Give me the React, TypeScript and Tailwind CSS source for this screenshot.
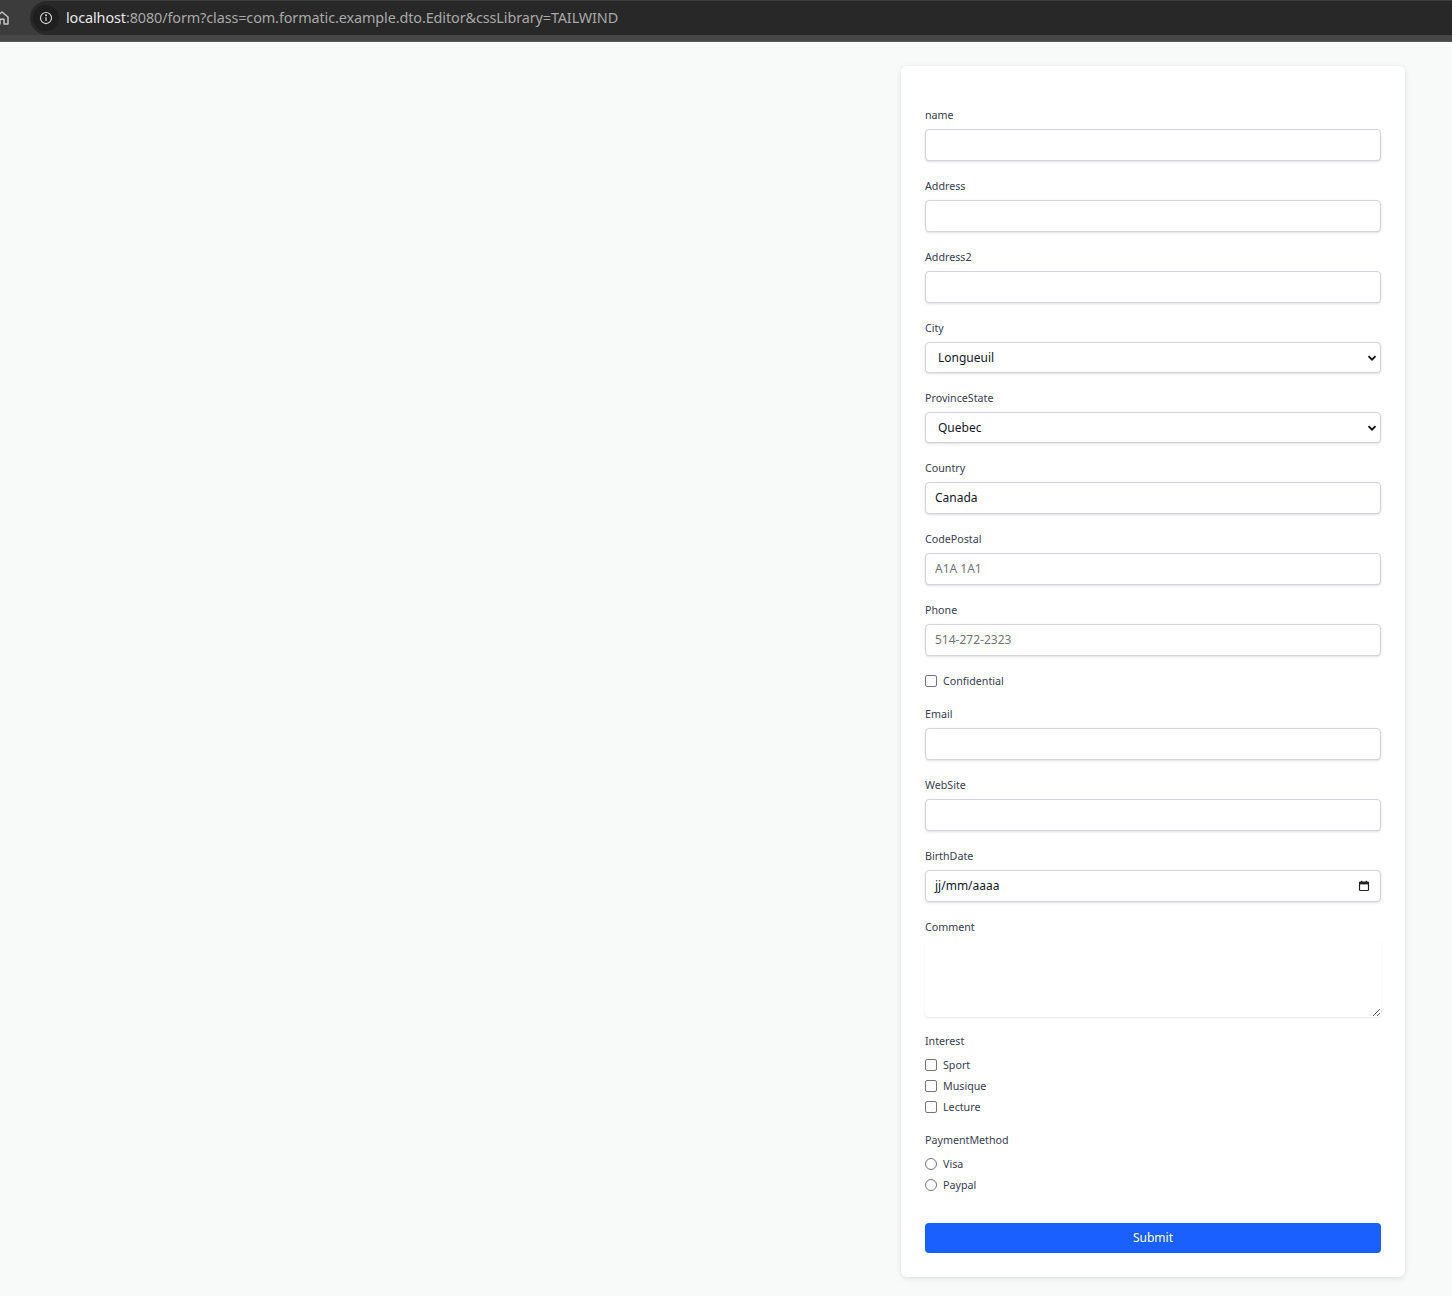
import React from "react";

const font = { fontFamily: '"Noto Sans", "Open Sans", sans-serif' };

function Label({ children }: { children: React.ReactNode }) {
  return <label className="block text-[10.7px] leading-[16px] text-[#374151] mb-[6px]">{children}</label>;
}

function TextField({ label, placeholder, value }: { label: string; placeholder?: string; value?: string }) {
  return (
    <div className="mb-[17px]">
      <Label>{label}</Label>
      <input
        type="text"
        defaultValue={value}
        placeholder={placeholder}
        className="block w-full h-[32px] rounded-[4px] border border-[#d1d5db] bg-white px-[9px] pb-[1px] text-[12px] text-[#111827] placeholder:text-[#757575] shadow-sm outline-none"
        style={font}
      />
    </div>
  );
}

function Chevron() {
  return (
    <svg width="10" height="10" viewBox="0 0 10 10" className="absolute right-[4px] top-1/2 -translate-y-1/2 pointer-events-none">
      <path d="M1.5 3.2 L5 6.7 L8.5 3.2" fill="none" stroke="#111" strokeWidth="1.9" />
    </svg>
  );
}

function SelectField({ label, value }: { label: string; value: string }) {
  return (
    <div className="mb-[17px]">
      <Label>{label}</Label>
      <div className="relative">
        <select
          defaultValue={value}
          className="block w-full h-[31px] appearance-none rounded-[4px] border border-[#d1d5db] bg-white pl-[12px] pr-8 text-[12px] text-[#111827] shadow-sm outline-none"
          style={font}
        >
          <option>{value}</option>
        </select>
        <Chevron />
      </div>
    </div>
  );
}

function Check({ label, radio }: { label: string; radio?: boolean }) {
  return (
    <div className="flex items-center h-[16px] mb-[5px]">
      <span
        className={
          "inline-block w-[12px] h-[12px] border border-[#767676] bg-white " + (radio ? "rounded-full" : "rounded-[2px]")
        }
      />
      <span className="ml-[6px] text-[10.7px] text-[#374151]">{label}</span>
    </div>
  );
}

export default function App() {
  return (
    <div className="min-h-[1296px] bg-[#f8f9f9]" style={font}>
      {/* browser bar */}
      <div className="h-[42px] bg-[#3c3c3c] flex flex-col overflow-hidden">
        <div className="h-[35px] flex items-center">
          <div className="w-[36px] h-full flex items-center -ml-[6px]">
            <svg width="16" height="16" viewBox="0 0 24 24" fill="none" stroke="#c8c8c8" strokeWidth="2.2">
              <path d="M3 10.5 L12 3 L21 10.5 V21 H15 V14 H9 V21 H3 Z" strokeLinejoin="round" />
            </svg>
          </div>
          <div className="flex-1 h-[34px] mt-[1px] bg-[#282828] rounded-l-full flex items-center">
            <div className="ml-[3px] w-[26px] h-[26px] rounded-full bg-[#1f1f1f] flex items-center justify-center">
              <svg width="14" height="14" viewBox="0 0 16 16" fill="none" stroke="#d0d0d0" strokeWidth="1.4">
                <circle cx="8" cy="8" r="6.3" />
                <path d="M8 7 V11.5" />
                <circle cx="8" cy="4.9" r="0.5" fill="#d0d0d0" />
              </svg>
            </div>
            <span className="ml-[7px] text-[14.4px] text-[#e8e8e8] tracking-[-0.1px]">
              localhost<span className="text-[#a8a8a8]">:8080/form?class=com.formatic.example.dto.Editor&amp;cssLibrary=TAILWIND</span>
            </span>
          </div>
        </div>
        <div className="h-[6px] bg-[#474747]" />
        <div className="h-[1px] bg-[#5a5a5a]" />
      </div>

      <div className="flex justify-end pr-[47px] pt-[24px] pb-[19px]">
        <div className="w-[504px] bg-white rounded-[6px] shadow-[0_1px_4px_rgba(0,0,0,0.08),0_2px_10px_rgba(0,0,0,0.04)] px-[24px] pt-[41px] pb-[24px]">
          <TextField label="name" />
          <TextField label="Address" />
          <TextField label="Address2" />
          <SelectField label="City" value="Longueuil" />
          <SelectField label="ProvinceState" value="Quebec" />
          <TextField label="Country" value="Canada" />
          <TextField label="CodePostal" placeholder="A1A 1A1" />
          <TextField label="Phone" placeholder="514-272-2323" />
          <div className="mb-[17px] flex items-center h-[16px]">
            <span className="inline-block w-[12px] h-[12px] border border-[#767676] rounded-[2px] bg-white" />
            <span className="ml-[6px] text-[10.7px] text-[#374151]">Confidential</span>
          </div>
          <TextField label="Email" />
          <TextField label="WebSite" />
          <div className="mb-[17px]">
            <Label>BirthDate</Label>
            <div className="flex items-center justify-between w-full h-[32px] rounded-[4px] border border-[#d1d5db] bg-white pl-[9px] pr-[10px] shadow-sm">
              <span className="text-[12px] text-[#111827]">jj/mm/aaaa</span>
              <svg width="12" height="12" viewBox="0 0 12 12">
                <rect x="1.5" y="2" width="9" height="8.5" rx="0.8" fill="none" stroke="#222" strokeWidth="1.2" />
                <rect x="1.5" y="2" width="9" height="2.4" fill="#222" />
                <rect x="3" y="0.8" width="1.2" height="2" fill="#222" />
                <rect x="7.8" y="0.8" width="1.2" height="2" fill="#222" />
              </svg>
            </div>
          </div>
          <div className="mb-[16px]">
            <Label>Comment</Label>
            <textarea
              className="block w-full h-[76px] rounded-[4px] bg-white shadow-[0_1px_2px_rgba(0,0,0,0.1)] border-0 outline-none text-[12px] p-2"
              style={font}
            />
          </div>
          <div className="mb-[17px]">
            <div className="text-[10.7px] leading-[16px] text-[#374151] mb-[8px]">Interest</div>
            <Check label="Sport" />
            <Check label="Musique" />
            <Check label="Lecture" />
          </div>
          <div>
            <div className="text-[10.7px] leading-[16px] text-[#374151] mb-[8px]">PaymentMethod</div>
            <Check label="Visa" radio />
            <Check label="Paypal" radio />
          </div>
          <button
            type="button"
            className="mt-[25px] w-full h-[30px] rounded-[4px] bg-[#1a5fff] text-white text-[12px]"
            style={font}
          >
            Submit
          </button>
        </div>
      </div>
    </div>
  );
}
